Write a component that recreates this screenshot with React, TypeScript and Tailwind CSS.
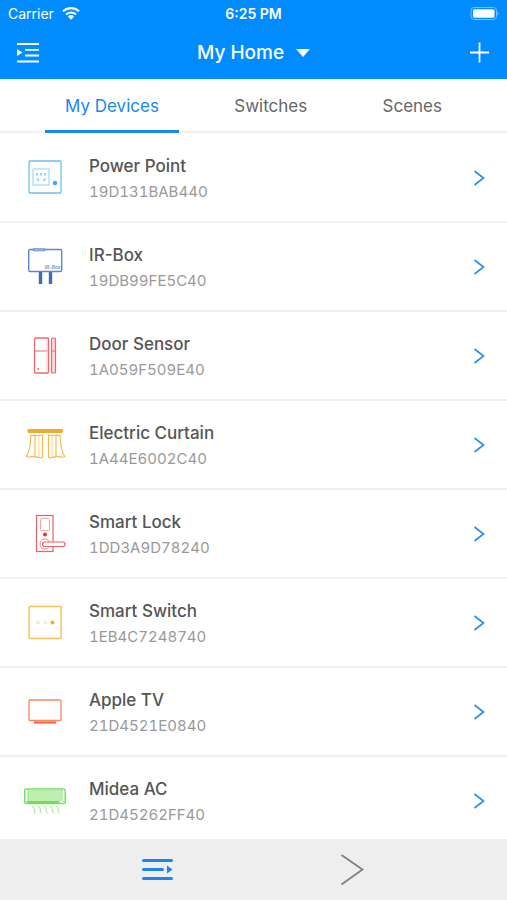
import type { ReactNode } from "react";

type Device = { name: string; serial: string; icon: ReactNode };

function PowerPointIcon() {
  return (
    <svg viewBox="0 0 44 44" className="size-11" fill="none" aria-hidden="true">
      <rect x="6" y="5" width="32" height="32" rx="1" stroke="#6cc0ee" strokeWidth="1.3" />
      <rect x="10" y="13" width="16" height="16" stroke="#94d0f2" />
      <path d="M14 17v2.5M18 17v2.5M22 17v2.5M14 22.500l2 2.500M22.500 22.500l-2 2.500" stroke="#5cb6ea" strokeWidth="1.200" />
      <circle cx="32" cy="27" r="2.300" fill="#45acdf" />
    </svg>
  );
}

function IrBoxIcon() {
  return (
    <svg viewBox="0 0 44 44" className="size-11" fill="none" aria-hidden="true">
      <rect x="5.700" y="4.500" width="33" height="22" rx="1.500" stroke="#5f86cb" strokeWidth="1.400" />
      <path d="M10 3.800h12v2H10z" fill="#a9bde2" stroke="#5f86cb" strokeWidth="0.800" />
      <text x="21.500" y="24.300" fontSize="5" fontStyle="italic" fontWeight="600" fill="#6e91d0" fontFamily="Inter, sans-serif">IR-Box</text>
      <path d="M17.500 27v12M27.500 27v12" stroke="#3f6cbc" strokeWidth="3.400" />
    </svg>
  );
}

function DoorSensorIcon() {
  return (
    <svg viewBox="0 0 44 44" className="size-11" fill="none" stroke="#f0686e" aria-hidden="true">
      <rect x="11.500" y="4" width="14" height="35" rx="1" strokeWidth="1.300" />
      <rect x="28.500" y="4" width="4" height="35" rx="1" strokeWidth="1.200" fill="#fbdcdd" />
      <path d="M11.500 17h14M28.500 17h4" strokeWidth="1.200" />
      <path d="M24 5v33" stroke="#f9c6c8" />
      <circle cx="15.300" cy="35" r="0.900" fill="#f0686e" stroke="none" />
    </svg>
  );
}

function CurtainIcon() {
  return (
    <svg viewBox="0 0 44 44" className="size-11" fill="none" stroke="#f1b84b" strokeWidth="1.1" strokeLinejoin="round" aria-hidden="true">
      <rect x="4.500" y="6" width="35.500" height="4" rx="1.400" fill="#efab2c" stroke="none" />
      <path d="M8 12q2 1.200 4 0 3.500 1.500 7.500 0v22q-2 1.500-3.700 0-2 1-4-1-1.500 1.500-3.500 0.500-2 1.500-5 0Q7.500 27 8 12Z" />
      <path d="M12 12v21" />
      <path d="M15.800 13v21" stroke="#f8dba5" />
      <path d="M37 12q-2 1.200-4 0-3.500 1.500-7.500 0v22q2 1.500 3.700 0 2 1 4-1 1.500 1.500 3.500 0.500 2 1.500 5 0Q37.500 27 37 12Z" />
      <path d="M33 12v21" />
      <path d="M29.200 13v21" stroke="#f8dba5" />
    </svg>
  );
}

function LockIcon() {
  return (
    <svg viewBox="0 0 44 44" className="size-11" fill="none" stroke="#ec6165" aria-hidden="true">
      <rect x="13.500" y="3.500" width="16.500" height="36" strokeWidth="1.200" />
      <rect x="17.500" y="6.500" width="9" height="12" rx="1" stroke="#f4a6a8" />
      <circle cx="22" cy="22.500" r="2" fill="#e2353b" stroke="none" />
      <circle cx="22" cy="32" r="5" stroke="#f08a8d" />
      <rect x="19.500" y="30" width="22.500" height="4.500" rx="2.200" fill="#fff" strokeWidth="1.200" />
    </svg>
  );
}

function SwitchIcon() {
  return (
    <svg viewBox="0 0 44 44" className="size-11" fill="none" aria-hidden="true">
      <rect x="6" y="5.500" width="32" height="32" rx="1" stroke="#f3bf5c" strokeWidth="1.400" />
      <circle cx="15" cy="21.500" r="1.500" stroke="#f5cf85" strokeWidth="0.800" />
      <circle cx="22.500" cy="21.500" r="1.500" stroke="#f5cf85" strokeWidth="0.800" />
      <circle cx="29.500" cy="21.500" r="2" fill="#f0ae2d" />
    </svg>
  );
}

function TvIcon() {
  return (
    <svg viewBox="0 0 44 44" className="size-11" fill="none" aria-hidden="true">
      <rect x="6" y="10" width="32" height="20.500" rx="1" stroke="#fa8560" strokeWidth="1.300" />
      <path d="M11 32.500h22" stroke="#f6602f" strokeWidth="2" />
    </svg>
  );
}

function AirConditionerIcon() {
  return (
    <svg viewBox="0 0 44 44" className="size-11" fill="none" aria-hidden="true">
      <rect x="5" y="11" width="33.500" height="11" fill="#bdf0b0" />
      <rect x="1.700" y="10" width="40.500" height="14.500" rx="1.500" stroke="#7ade66" strokeWidth="1.500" />
      <path d="M5 11v10.500l-3 2M39 11v10.500l3 2" stroke="#8ae277" />
      <path d="M4.500 23.400h32" stroke="#72db5d" strokeWidth="3" />
      <path d="M9 27l2 2 .500 4 1.500 1.500M15 27l2 2 .500 4 1.500 1.500M21 27l2 2 .500 4 1.500 1.500M27 27l2 2 .500 4 1.500 1.500M33 27l2 2 .500 4 1.500 1.500" stroke="#9be58a" />
    </svg>
  );
}

const devices: Device[] = [
  { name: "Power Point", serial: "19D131BAB440", icon: <PowerPointIcon /> },
  { name: "IR-Box", serial: "19DB99FE5C40", icon: <IrBoxIcon /> },
  { name: "Door Sensor", serial: "1A059F509E40", icon: <DoorSensorIcon /> },
  { name: "Electric Curtain", serial: "1A44E6002C40", icon: <CurtainIcon /> },
  { name: "Smart Lock", serial: "1DD3A9D78240", icon: <LockIcon /> },
  { name: "Smart Switch", serial: "1EB4C7248740", icon: <SwitchIcon /> },
  { name: "Apple TV", serial: "21D4521E0840", icon: <TvIcon /> },
  { name: "Midea AC", serial: "21D45262FF40", icon: <AirConditionerIcon /> },
];

const tabs = ["My Devices", "Switches", "Scenes"];

function StatusBar() {
  return (
    <div className="grid h-7 grid-cols-3 items-center px-2 text-sm">
      <div className="flex items-center gap-2">
        <span>Carrier</span>
        <svg viewBox="0 0 18 14" className="h-3.5 w-[18px]" fill="none" stroke="#fff" strokeWidth="2.200" aria-hidden="true">
          <path d="M1 4.300a11.500 11.500 0 0 1 16 0M4 7.500a7.200 7.200 0 0 1 10 0" />
          <path d="M5.900 9.500a4.500 4.500 0 0 1 6.200 0L9 12.800Z" fill="#fff" stroke="none" />
        </svg>
      </div>
      <span className="text-center font-semibold">6:25 PM</span>
      <svg viewBox="0 0 30 14" className="h-3.5 w-[30px] justify-self-end" fill="none" aria-hidden="true">
        <rect x="2" y="0.500" width="25.500" height="12" rx="3" stroke="#7cc1ff" />
        <rect x="4" y="2.300" width="21.500" height="8.500" rx="1.500" fill="#fff" />
        <path d="M28.500 4.500v4c1.200-.5 1.200-3.500 0-4Z" fill="#7cc1ff" />
      </svg>
    </div>
  );
}

export default function App() {
  return (
    <div className="flex h-screen flex-col bg-white font-['Inter',sans-serif] text-[#555]">
      <header className="shrink-0 bg-[#008cff] text-white">
        <StatusBar />
        <div className="flex h-[51px] items-center justify-between px-4 pb-0.5">
          <button type="button" aria-label="Open menu">
            <svg viewBox="0 0 24 24" className="size-6" fill="none" stroke="#fff" strokeWidth="1.800" aria-hidden="true">
              <path d="M1 3h22M9 8.800h14M9 14.500h14M1 20.500h22" />
              <path d="M1 8v7l5.500-3.500Z" fill="#fff" stroke="none" />
            </svg>
          </button>
          <button type="button" className="flex items-center gap-3 text-[19px] leading-6 font-medium">
            My Home
            <svg viewBox="0 0 14 8" className="h-2 w-3.5" fill="#fff" aria-hidden="true">
              <path d="M0 0h14L7 8Z" />
            </svg>
          </button>
          <button type="button" aria-label="Add device">
            <svg viewBox="0 0 24 24" className="size-6" fill="none" stroke="#fff" strokeWidth="1.800" aria-hidden="true">
              <path d="M3 11.500h19M12.500 1.500v20" />
            </svg>
          </button>
        </div>
      </header>

      <nav className="flex h-[54px] shrink-0 justify-between border-b-2 border-[#f0f0f0] px-[45px] text-[17px]">
        {tabs.map((tab, index) => (
          <button
            key={tab}
            type="button"
            className={
              index === 0
                ? "-mb-0.5 border-b-3 border-[#1a86ee] px-5 pt-1 text-[#1a86ee]"
                : "-mb-0.5 border-b-3 border-transparent px-5 pt-1 text-[#666]"
            }
          >
            {tab}
          </button>
        ))}
      </nav>

      <main className="min-h-0 flex-1 overflow-y-auto pt-px [scrollbar-width:none]">
        <ul>
          {devices.map((device) => (
            <li key={device.serial} className="border-b-2 border-[#efefef]">
              <button type="button" className="flex h-[87px] w-full items-center pr-5 pl-[23px] text-left">
                {device.icon}
                <span className="flex flex-1 flex-col pt-0.5 pl-[22px]">
                  <span className="text-[17px] leading-[25px] font-medium">{device.name}</span>
                  <span className="text-[15px] leading-[25px] text-[#999] tabular-nums">{device.serial}</span>
                </span>
                <svg viewBox="0 0 16 16" className="size-4" fill="none" stroke="#2b90ea" strokeWidth="1.700" aria-hidden="true">
                  <path d="M3.500 1l9 7-9 7" />
                </svg>
              </button>
            </li>
          ))}
        </ul>
      </main>

      <footer className="flex h-[61px] shrink-0 items-center justify-center gap-[162px] bg-[#eee]">
        <button type="button" aria-label="Device list">
          <svg viewBox="0 0 32 32" className="size-8" fill="none" stroke="#1a86ee" strokeWidth="3" strokeLinecap="round" aria-hidden="true">
            <path d="M2.500 6.500h28M2.500 15.500h19M2.500 24.500h28" />
            <path d="M26 11.500v8l5.500-4Z" fill="#1a86ee" stroke="none" />
          </svg>
        </button>
        <button type="button" aria-label="Next">
          <svg viewBox="0 0 32 32" className="size-8" fill="none" stroke="#808080" strokeWidth="1.800" aria-hidden="true">
            <path d="M6.500 1l21 14.500-21 15" />
          </svg>
        </button>
      </footer>
    </div>
  );
}
